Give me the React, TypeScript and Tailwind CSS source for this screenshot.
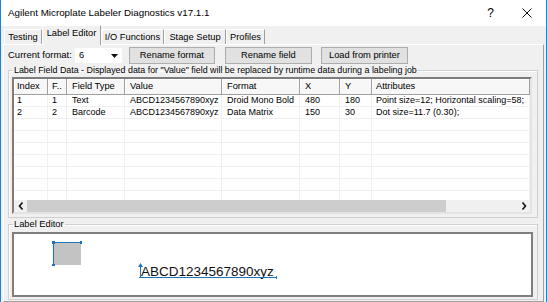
import React from 'react';

const columns = [
  { label: 'Index', w: 34, pl: 'pl-[3px]' },
  { label: 'F..', w: 19, pl: 'pl-[4px]' },
  { label: 'Field Type', w: 58, pl: 'pl-[5px]' },
  { label: 'Value', w: 97, pl: 'pl-[5px]' },
  { label: 'Format', w: 78, pl: 'pl-[5px]' },
  { label: 'X', w: 40, pl: 'pl-[5px]' },
  { label: 'Y', w: 32, pl: 'pl-[5px]' },
  { label: 'Attributes', w: 158, pl: 'pl-[4px]' },
];

const rows = [
  ['1', '1', 'Text', 'ABCD1234567890xyz', 'Droid Mono Bold', '480', '180', 'Point size=12; Horizontal scaling=58;'],
  ['2', '2', 'Barcode', 'ABCD1234567890xyz', 'Data Matrix', '150', '30', 'Dot size=11.7 (0.30);'],
  [], [], [], [], [], [], [],
];

const tabs = [
  { label: 'Testing', w: 'w-[38px]' },
  { label: 'Label Editor', w: 'w-[59px]', active: true },
  { label: 'I/O Functions', w: 'w-[63px]' },
  { label: 'Stage Setup', w: 'w-[62px]' },
  { label: 'Profiles', w: 'w-[39px]' },
];

function Tab({ label, w, active }: { label: string; w: string; active?: boolean }) {
  if (active) {
    return (
      <div className={`${w} relative z-10 -mb-px flex h-[20px] justify-center border-l border-t border-white border-r border-r-[#a0a0a0] bg-[#f0f0f0] pt-[2px] leading-[11px]`}>
        {label}
      </div>
    );
  }
  return (
    <div className={`${w} flex h-[15px] items-center justify-center border-l border-t border-white border-r border-r-[#a0a0a0] bg-[#f0f0f0] leading-[11px]`}>
      {label}
    </div>
  );
}

function Button({ children, w }: { children: React.ReactNode; w: string }) {
  return (
    <div className={`${w} flex h-[17px] items-center justify-center border border-[#adadad] bg-[#e1e1e1]`}>
      {children}
    </div>
  );
}

function Chevron({ dir }: { dir: 'left' | 'right' }) {
  return (
    <svg width="6" height="8" viewBox="0 0 6 8">
      <path
        d={dir === 'left' ? 'M4.5 0.5 L1.5 4 L4.5 7.5' : 'M1.5 0.5 L4.5 4 L1.5 7.5'}
        fill="none"
        stroke="#111"
        strokeWidth="1.6"
      />
    </svg>
  );
}

export default function App() {
  return (
    <div
      className="flex h-[302px] w-[547px] flex-col overflow-hidden border-x border-[#1883d7] bg-[#f0f0f0] text-[9.3px] text-black"
      style={{ fontFamily: '"Liberation Sans", Arial, sans-serif' }}
    >
      {/* title bar */}
      <div className="flex h-[26px] shrink-0 items-center bg-white pl-[7px]">
        <span className="text-[9.8px]">Agilent Microplate Labeler Diagnostics v17.1.1</span>
        <span className="ml-auto mr-[28px] text-[12px]">?</span>
        <svg className="mr-[14px]" width="10" height="10" viewBox="0 0 10 10">
          <path d="M0.5 0.5 L9.5 9.5 M9.5 0.5 L0.5 9.5" stroke="#111" strokeWidth="1" />
        </svg>
      </div>

      {/* tabs */}
      <div className="flex h-[18px] shrink-0 items-end pl-[3px]">
        {tabs.map((t) => (
          <Tab key={t.label} {...t} />
        ))}
      </div>

      {/* tab page */}
      <div className="mx-[2px] flex flex-1 flex-col border-l border-t border-white border-r border-b border-r-[#a0a0a0] border-b-[#a0a0a0] pl-[4px]">
        <div className="mt-[2px] flex h-[17px] items-center">
          <span className="text-[9.5px]">Current format:</span>
          <div className="ml-[3px] flex h-[15px] w-[47px] items-center bg-white pl-[4px] pr-[4px]">
            <span>6</span>
            <svg className="ml-auto" width="7" height="4" viewBox="0 0 7 4">
              <path d="M0 0 H7 L3.5 4 Z" fill="#111" />
            </svg>
          </div>
          <div className="ml-[7px]">
            <Button w="w-[86px]">Rename format</Button>
          </div>
          <div className="ml-[10px]">
            <Button w="w-[87px]">Rename field</Button>
          </div>
          <div className="ml-[9px]">
            <Button w="w-[87px]">Load from printer</Button>
          </div>
        </div>

        {/* Label Field Data group */}
        <fieldset className="mt-[1px] w-[530px] border border-[#d0d0d0] shadow-[inset_1px_1px_0_#fff]">
          <legend className="ml-[4px] px-[1px] text-[8.9px] leading-[11px]">
            Label Field Data - Displayed data for "Value" field will be replaced by runtime data during a labeling job
          </legend>
          <div className="mb-[3px] ml-[3px] mt-[1px] flex h-[137px] w-[520px] flex-col border-2 border-l-[#7d7d7d] border-t-[#7d7d7d] border-r-[#e3e3e3] border-b-[#e3e3e3] bg-white text-[9px]">
            <div className="flex h-[16px] shrink-0">
              {columns.map((c) => (
                <div
                  key={c.label}
                  className={`${c.pl} flex shrink-0 items-center border-b border-r border-[#a0a0a0] bg-[#f7f7f7] text-[9.3px] shadow-[inset_1px_1px_0_#fff]`}
                  style={{ width: c.w }}
                >
                  {c.label}
                </div>
              ))}
            </div>
            <div className="flex-1 overflow-hidden">
              {rows.map((r, i) => (
                <div key={i} className="flex h-[12px]">
                  {columns.map((c, j) => (
                    <div
                      key={c.label}
                      className={`${c.pl} flex shrink-0 items-center overflow-hidden whitespace-nowrap border-b border-r border-[#f0f0f0] leading-[11px]`}
                      style={{ width: c.w }}
                    >
                      {r[j] ?? ''}
                    </div>
                  ))}
                </div>
              ))}
            </div>
            <div className="flex h-[12px] shrink-0 bg-[#f0f0f0]">
              <div className="flex w-[13px] items-center justify-center">
                <Chevron dir="left" />
              </div>
              <div className="w-[419px] bg-[#cdcdcd]" />
              <div className="flex-1" />
              <div className="flex w-[13px] items-center justify-center">
                <Chevron dir="right" />
              </div>
            </div>
          </div>
        </fieldset>

        {/* Label Editor group */}
        <fieldset className="mt-[1px] w-[530px] border border-[#d0d0d0] shadow-[inset_1px_1px_0_#fff]">
          <legend className="ml-[4px] px-[1px] leading-[11px]">Label Editor</legend>
          <div className="relative mb-[2px] ml-[3px] mt-[2px] h-[65px] w-[521px] border-2 border-[#7f7f7f] bg-white">
            {/* barcode placeholder with selection handles */}
            <div className="absolute left-[40px] top-[9px] h-[22px] w-[27px] bg-[#c3c3c3]" />
            <div className="absolute left-[39px] top-[8px] h-px w-[28px] bg-[#1c72bd]" />
            <div className="absolute left-[39px] top-[8px] h-[23px] w-px bg-[#1c72bd]" />
            <div className="absolute left-[38px] top-[7px] h-[3px] w-[3px] bg-[#1c72bd]" />
            <div className="absolute left-[66px] top-[7px] h-[3px] w-[2px] bg-[#1c72bd]" />
            <div className="absolute left-[38px] top-[30px] h-[2px] w-[3px] bg-[#1c72bd]" />

            {/* text field */}
            <span className="absolute left-[127px] top-[31px] text-[13.5px] leading-[14px] text-[#111]">
              ABCD1234567890xyz
            </span>
            <div className="absolute left-[125px] top-[43px] h-px w-[138px] bg-[#1c72bd]" />
            <div className="absolute left-[126px] top-[31px] h-[12px] w-px bg-[#1c72bd]" />
            <svg className="absolute left-[124px] top-[29px]" width="5" height="4" viewBox="0 0 5 4">
              <path d="M2.5 0 L5 4 H0 Z" fill="#1c72bd" />
            </svg>
            <div className="absolute left-[262px] top-[42px] h-[3px] w-px bg-[#1c72bd]" />
          </div>
        </fieldset>
      </div>
    </div>
  );
}
